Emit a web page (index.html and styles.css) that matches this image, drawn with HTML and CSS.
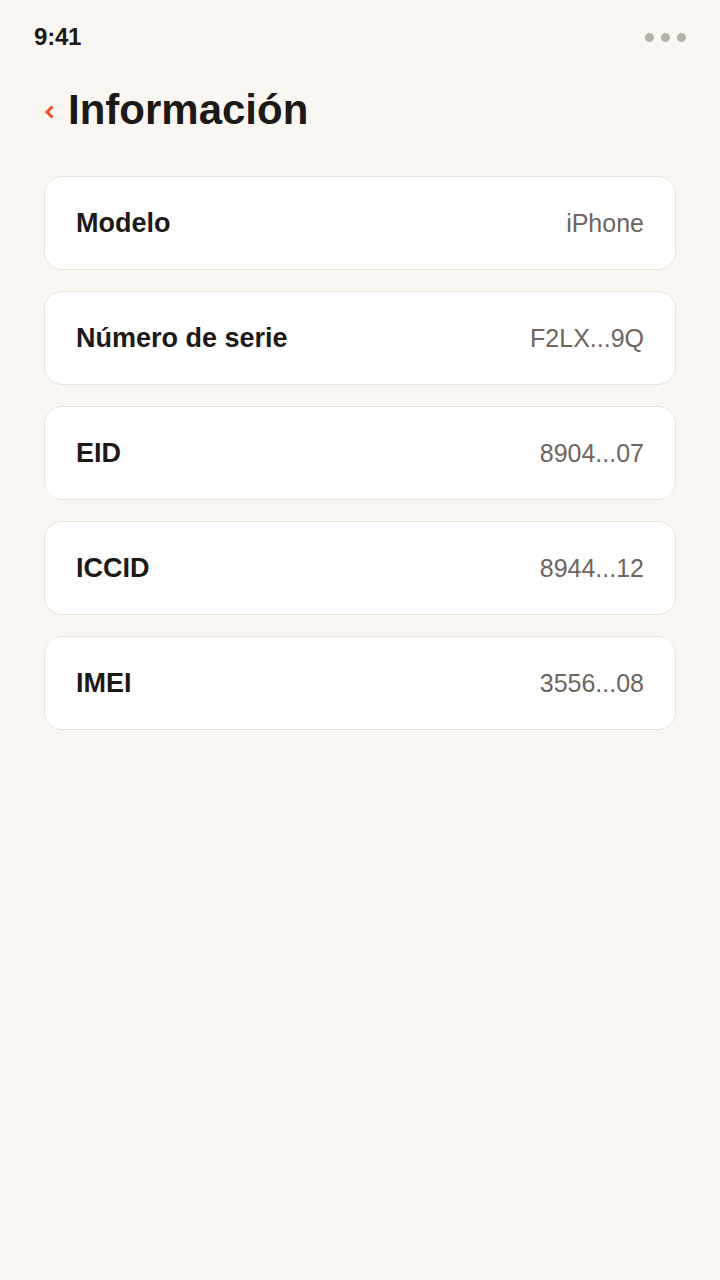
FILE: index.html
```html
<!DOCTYPE html>
<html lang="es">
<head>
<meta charset="utf-8">
<title>Información</title>
<link rel="stylesheet" href="styles.css">
</head>
<body>
<div class="screen">
  <div class="status">
    <span class="time">9:41</span>
    <span class="dots"><i></i><i></i><i></i></span>
  </div>
  <header class="header">
    <svg class="back" width="10" height="14" viewBox="0 0 10 14"><path d="M8.5 1.5 L3 7 L8.5 12.5" fill="none" stroke="#f0492b" stroke-width="3" stroke-linecap="butt" stroke-linejoin="miter"/></svg>
    <h1 class="title">Información</h1>
  </header>
  <div class="list">
    <div class="card"><span class="label">Modelo</span><span class="value">iPhone</span></div>
    <div class="card"><span class="label">Número de serie</span><span class="value">F2LX...9Q</span></div>
    <div class="card"><span class="label">EID</span><span class="value">8904...07</span></div>
    <div class="card"><span class="label">ICCID</span><span class="value">8944...12</span></div>
    <div class="card"><span class="label">IMEI</span><span class="value">3556...08</span></div>
  </div>
</div>
</body>
</html>
```
FILE: styles.css
```css
html, body {
  margin: 0;
  padding: 0;
  background: #faf7f2;
}
body {
  font-family: "Liberation Sans", Arial, sans-serif;
  color: #1c1917;
}
.screen {
  width: 720px;
  min-height: 1280px;
  box-sizing: border-box;
  padding: 0 44px;
}
.status {
  height: 74px;
  display: flex;
  align-items: center;
  justify-content: space-between;
  margin-left: -10px;
  margin-right: -10px;
}
.time {
  font-size: 24px;
  font-weight: 700;
  letter-spacing: -0.2px;
  color: #1c1917;
}
.dots {
  display: flex;
  gap: 7px;
  padding-right: 0;
}
.dots i {
  width: 9px;
  height: 9px;
  border-radius: 50%;
  background: #b9b1a9;
  display: block;
}
.header {
  display: flex;
  align-items: center;
  gap: 14px;
  height: 72px;
}
.back {
  display: block;
  margin-top: 4px;
}
.title {
  margin: 0;
  font-size: 42px;
  font-weight: 700;
  letter-spacing: 0;
  color: #1c1917;
  line-height: 1;
}
.list {
  display: flex;
  flex-direction: column;
  gap: 21px;
  margin-top: 30px;
}
.card {
  height: 94px;
  box-sizing: border-box;
  background: #ffffff;
  border: 1px solid #ebe3d9;
  border-radius: 18px;
  display: flex;
  align-items: center;
  justify-content: space-between;
  padding: 0 31px;
}
.label {
  font-size: 27px;
  font-weight: 700;
  color: #1c1917;
}
.value {
  font-size: 25px;
  font-weight: 400;
  color: #6e655e;
}
```
